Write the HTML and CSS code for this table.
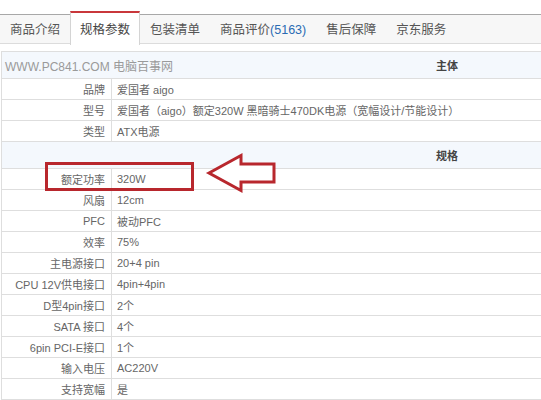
FILE: index.html
```html
<!DOCTYPE html>
<html lang="zh-CN">
<head>
    <meta charset="UTF-8">
    <title>规格参数</title>
    <link rel="stylesheet" href="styles.css">
</head>
<body>
    <div class="page">
        <ul class="tabs">
            <li class="tab">商品介绍</li>
            <li class="tab active">规格参数</li>
            <li class="tab">包装清单</li>
            <li class="tab">商品评价<span class="count">(5163)</span></li>
            <li class="tab">售后保障</li>
            <li class="tab">京东服务</li>
        </ul>

        <table class="spec">
            <colgroup>
                <col class="col-key">
                <col>
            </colgroup>
            <tr class="group">
                <th colspan="2"><span class="mark">WWW.PC841.COM 电脑百事网</span>主体</th>
            </tr>
            <tr><td class="key">品牌</td><td>爱国者 aigo</td></tr>
            <tr><td class="key">型号</td><td>爱国者（aigo）额定320W 黑暗骑士470DK电源（宽幅设计/节能设计）</td></tr>
            <tr><td class="key">类型</td><td>ATX电源</td></tr>
            <tr class="group">
                <th colspan="2">规格</th>
            </tr>
            <tr><td class="key">额定功率</td><td>320W</td></tr>
            <tr><td class="key">风扇</td><td>12cm</td></tr>
            <tr><td class="key">PFC</td><td>被动PFC</td></tr>
            <tr><td class="key">效率</td><td>75%</td></tr>
            <tr><td class="key">主电源接口</td><td>20+4 pin</td></tr>
            <tr><td class="key">CPU 12V供电接口</td><td>4pin+4pin</td></tr>
            <tr><td class="key">D型4pin接口</td><td>2个</td></tr>
            <tr><td class="key">SATA 接口</td><td>4个</td></tr>
            <tr><td class="key">6pin PCI-E接口</td><td>1个</td></tr>
            <tr><td class="key">输入电压</td><td>AC220V</td></tr>
            <tr><td class="key">支持宽幅</td><td>是</td></tr>
            <tr><td class="key">&nbsp;</td><td>&nbsp;</td></tr>
        </table>

        <svg class="callout" width="541" height="400" viewBox="0 0 541 400">
            <rect x="46.5" y="163.5" width="146" height="26" fill="none" stroke="#b8272d" stroke-width="3"/>
            <polygon points="209,173 241,155.5 241,164 274,164 274,182 241,182 241,190.5" fill="#fff" stroke="#b8272d" stroke-width="3" stroke-linejoin="miter"/>
        </svg>
    </div>
</body>
</html>
```

FILE: styles.css
```css
* {
    box-sizing: border-box;
    margin: 0;
    padding: 0;
}

html, body {
    overflow: hidden;
    background: #fff;
}

body {
    font-family: "Liberation Sans", "Noto Sans CJK SC", sans-serif;
    font-size: 11px;
    color: #666;
}

.page {
    position: relative;
    width: 541px;
    height: 400px;
    overflow: hidden;
}

/* tab bar */
.tabs {
    list-style: none;
    display: flex;
    margin-top: 14px;
    height: 30px;
    background: #f7f7f7;
    border-top: 1px solid #a8a8a8;
    border-bottom: 1px solid #dcdcdc;
}

.tab {
    height: 28px;
    line-height: 28px;
    padding: 0 9px;
    border-left: 1px solid transparent;
    border-right: 1px solid transparent;
    font-family: "Noto Sans CJK SC", sans-serif;
    font-size: 12.5px;
    color: #555;
    white-space: nowrap;
}

.tab.active {
    position: relative;
    margin-top: -4px;
    height: 34px;
    line-height: 31px;
    background: #fff;
    border-top: 2px solid #c9373b;
    border-left-color: #d4d4d4;
    border-right-color: #d4d4d4;
    color: #444;
}

.tab .count {
    color: #2a6bb3;
    font-family: "Liberation Sans", "Noto Sans CJK SC", sans-serif;
}

/* spec table */
.spec {
    margin: 7px 0 0 1px;
    width: 892px;
    border-collapse: collapse;
    table-layout: fixed;
}

.spec .col-key {
    width: 110px;
}

.spec td, .spec th {
    border: 1px solid #dedede;
    height: 21px;
    padding: 0 5px;
    white-space: nowrap;
    overflow: hidden;
}

.spec td.key {
    text-align: right;
    padding-right: 6px;
}

.spec .group th {
    position: relative;
    height: 27px;
    background: #f4f8fd;
    text-align: center;
    font-weight: bold;
    color: #444;
    font-family: "Noto Sans CJK SC", sans-serif;
}

.spec .mark {
    position: absolute;
    left: 3px;
    top: 5px;
    font-size: 12px;
    font-weight: normal;
    color: #9a9a9a;
    font-family: "Liberation Sans", "Noto Sans CJK SC", sans-serif;
}

.callout {
    position: absolute;
    left: 0;
    top: 0;
    pointer-events: none;
}
```
